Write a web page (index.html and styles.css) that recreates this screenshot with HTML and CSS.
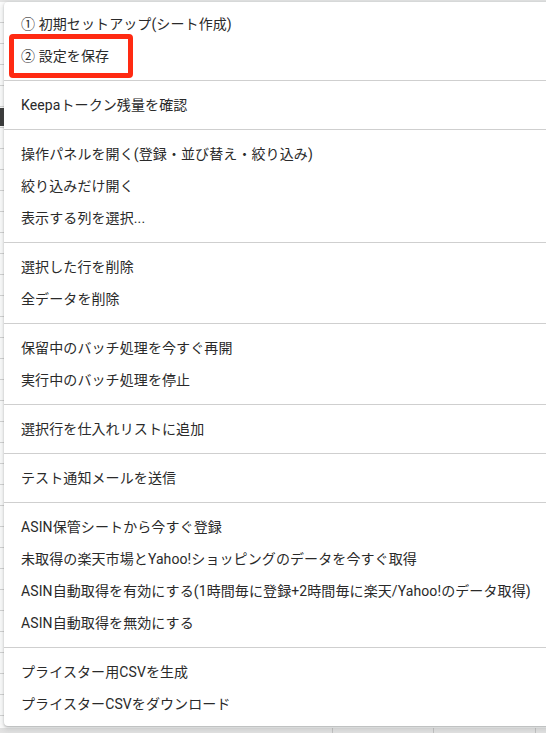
FILE: index.html
```html
<!DOCTYPE html>
<html lang="ja">
<head>
    <meta charset="UTF-8">
    <title>メニュー</title>
    <link rel="stylesheet" href="styles.css">
</head>
<body>
    <div class="sheet">
        <div class="sheet-top"></div>
        <div class="sheet-body">
            <div class="row-strip">
                <div class="strip-dark"></div>
            </div>
        </div>
        <div class="sheet-bottom">
            <span class="col col-a"></span>
            <span class="col col-b"></span>
            <span class="col col-c"></span>
        </div>
    </div>

    <div class="menu">
        <div class="menu-item">① 初期セットアップ(シート作成)</div>
        <div class="menu-item">② 設定を保存</div>
        <div class="menu-sep"></div>
        <div class="menu-item">Keepaトークン残量を確認</div>
        <div class="menu-sep"></div>
        <div class="menu-item">操作パネルを開く(登録・並び替え・絞り込み)</div>
        <div class="menu-item">絞り込みだけ開く</div>
        <div class="menu-item">表示する列を選択...</div>
        <div class="menu-sep"></div>
        <div class="menu-item">選択した行を削除</div>
        <div class="menu-item">全データを削除</div>
        <div class="menu-sep"></div>
        <div class="menu-item">保留中のバッチ処理を今すぐ再開</div>
        <div class="menu-item">実行中のバッチ処理を停止</div>
        <div class="menu-sep"></div>
        <div class="menu-item">選択行を仕入れリストに追加</div>
        <div class="menu-sep"></div>
        <div class="menu-item">テスト通知メールを送信</div>
        <div class="menu-sep"></div>
        <div class="menu-item">ASIN保管シートから今すぐ登録</div>
        <div class="menu-item">未取得の楽天市場とYahoo!ショッピングのデータを今すぐ取得</div>
        <div class="menu-item">ASIN自動取得を有効にする(1時間毎に登録+2時間毎に楽天/Yahoo!のデータ取得)</div>
        <div class="menu-item">ASIN自動取得を無効にする</div>
        <div class="menu-sep"></div>
        <div class="menu-item">プライスター用CSVを生成</div>
        <div class="menu-item">プライスターCSVをダウンロード</div>
    </div>

    <div class="highlight"></div>
</body>
</html>
```

FILE: styles.css
```css
body {
    margin: 0;
    width: 546px;
    height: 733px;
    overflow: hidden;
    position: relative;
    font-family: Roboto, "Noto Sans CJK JP", sans-serif;
    background-color: #ffffff;
}

/* spreadsheet showing behind the menu */
.sheet {
    display: flex;
    flex-direction: column;
    height: 733px;
}

.sheet-top {
    height: 2px;
    background-color: #e6e6e6;
}

.sheet-body {
    flex: 1;
    background-color: #ffffff;
}

.row-strip {
    width: 4px;
    height: 100%;
    padding-top: 106px;
    box-sizing: border-box;
    background: repeating-linear-gradient(180deg, #ffffff 0, #ffffff 20px, #d6d6d6 20px, #d6d6d6 21px);
}

.strip-dark {
    height: 18px;
    background-color: #3c3c3c;
}

.sheet-bottom {
    height: 5px;
    background-color: #e4e4e4;
    position: relative;
}

.col {
    position: absolute;
    top: 0;
    width: 1px;
    height: 5px;
    background-color: #c4c4c4;
}

.col-a { left: 332px; }
.col-b { left: 433px; }
.col-c { left: 535px; }

/* dropdown menu */
.menu {
    position: absolute;
    top: 2px;
    left: 4px;
    right: -12px;
    padding: 6px 0;
    background-color: #ffffff;
    border-radius: 4px;
    box-shadow: 0 2px 6px 2px rgba(60, 64, 67, 0.15), 0 1px 2px rgba(60, 64, 67, 0.3);
}

.menu-item {
    height: 32px;
    line-height: 32px;
    padding: 0 17px;
    font-size: 14px;
    letter-spacing: 0.1px;
    color: #2a2a2a;
    white-space: nowrap;
}

.menu-sep {
    height: 1px;
    margin: 8px 0;
    background-color: #cfcfcf;
}

/* red annotation box */
.highlight {
    position: absolute;
    left: 9px;
    top: 34px;
    width: 114px;
    height: 34px;
    border: 5px solid #ff2a12;
    border-radius: 4px;
}
```
